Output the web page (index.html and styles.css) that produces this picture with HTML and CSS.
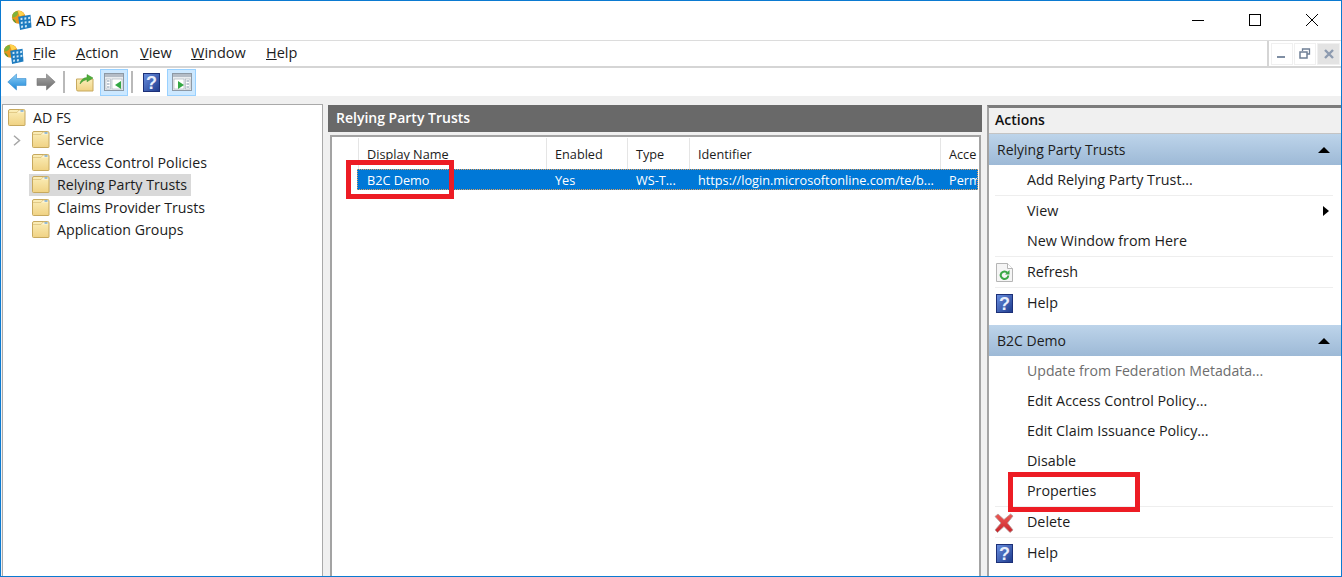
FILE: index.html
```html
<!DOCTYPE html>
<html lang="en">
<head>
    <meta charset="UTF-8">
    <meta name="viewport" content="width=device-width, initial-scale=1.0">
    <title>AD FS</title>
    <link rel="stylesheet" href="styles.css">
</head>
<body>
    <svg class="icon-defs" width="0" height="0">
        <defs>
            <linearGradient id="folderFill" x1="0" y1="0" x2="0" y2="1">
                <stop offset="0" stop-color="#fbeeb9"/>
                <stop offset="1" stop-color="#f0d283"/>
            </linearGradient>
            <linearGradient id="helpFill" x1="0" y1="0" x2="1" y2="1">
                <stop offset="0" stop-color="#6a90e0"/>
                <stop offset="1" stop-color="#1d3a8c"/>
            </linearGradient>
            <linearGradient id="backFill" x1="0" y1="0" x2="0" y2="1">
                <stop offset="0" stop-color="#8fd0f7"/>
                <stop offset="1" stop-color="#1b86d6"/>
            </linearGradient>
            <linearGradient id="fwdFill" x1="0" y1="0" x2="0" y2="1">
                <stop offset="0" stop-color="#a8a8a8"/>
                <stop offset="1" stop-color="#6a6a6a"/>
            </linearGradient>
            <linearGradient id="xFill" x1="0" y1="0" x2="0" y2="1">
                <stop offset="0" stop-color="#ee5a55"/>
                <stop offset="1" stop-color="#c9252b"/>
            </linearGradient>
            <symbol id="i-folder" viewBox="0 0 18 17">
                <path d="M.5 3V2Q.5.5 2 .5h13.5Q17 .5 17 2v14q0 .5-.5.5h-15q-1 0-1-1z" fill="url(#folderFill)" stroke="#c7a95e"/>
                <path d="M1 3.5h8L11 1h5.500v2.500" fill="#fff6d4" stroke="#d8bd75" stroke-width=".7"/>
                <rect x="12.500" y="1.300" width="3" height="1.400" fill="#6fa8dc"/>
            </symbol>
            <symbol id="i-help" viewBox="0 0 17 19">
                <rect x=".5" y=".5" width="16" height="18" fill="url(#helpFill)" stroke="#1c3078"/>
                <text x="8.500" y="16" text-anchor="middle" font-family="Liberation Sans, sans-serif" font-size="18" font-weight="700" fill="#e8eefc">?</text>
            </symbol>
            <symbol id="i-adfs" viewBox="0 0 22 21">
                <circle cx="8" cy="7.500" r="7" fill="#e8961e"/>
                <path d="M1.500 5Q3 1.500 7 1q1 3-1 5t-4.500 2z" fill="#7fb23a"/>
                <path d="M7 .8q5-.5 7 4l-5 2z" fill="#ffd34d"/>
                <path d="M1.500 9q3 1 4 5-3-1-4-5z" fill="#5b9a35"/>
                <path d="M7.500 7l13-2 1 13.500-12 2.500z" fill="#1e7cc0"/>
                <path d="M10 8.500l2-.3v2.300h-2zM14 7.900l2-.3v2.300l-2 .3zM18 7.300l2-.3v2.300l-2 .3zM10.300 12.500l2-.3v2.300l-2 .3zM14.300 12l2-.3v2.300l-2 .3zM18.300 11.500l2-.3v2.300l-2 .3zM10.600 16.500l2-.3v2.300l-2 .3zM14.600 16l2-.3v2.300l-2 .3z" fill="#c9e6f7"/>
            </symbol>
            <symbol id="i-pane" viewBox="0 0 20 18">
                <rect x=".5" y=".5" width="19" height="17" fill="#e9ecef" stroke="#8d99a5"/>
                <rect x="1" y="1" width="18" height="3" fill="#b4bcc6"/>
                <rect x="2" y="6" width="4.500" height="10" fill="#fff" stroke="#a3adb7" stroke-width=".6"/>
                <path d="M3 8h2.500M3 11h2.500M3 14h2.500" stroke="#7f93a8"/>
                <rect x="8" y="6" width="10" height="10" fill="#fff" stroke="#a3adb7" stroke-width=".6"/>
            </symbol>
        </defs>
    </svg>

    <div class="window">
        <header class="titlebar">
            <svg class="title-icon"><use href="#i-adfs"/></svg>
            <span class="title-text">AD FS</span>
            <div class="win-controls">
                <svg class="win-btn" viewBox="0 0 14 14"><path d="M1 7.500h12" stroke="#000"/></svg>
                <svg class="win-btn" viewBox="0 0 14 14"><rect x="1.500" y="1.500" width="11" height="11" fill="none" stroke="#000"/></svg>
                <svg class="win-btn" viewBox="0 0 14 14"><path d="M1 1l12 12M13 1L1 13" stroke="#000"/></svg>
            </div>
        </header>

        <nav class="menubar">
            <svg class="menu-icon"><use href="#i-adfs"/></svg>
            <div class="menu-items">
                <span class="menu-item m-file"><u>F</u>ile</span>
                <span class="menu-item m-action"><u>A</u>ction</span>
                <span class="menu-item m-view"><u>V</u>iew</span>
                <span class="menu-item m-window"><u>W</u>indow</span>
                <span class="menu-item m-help"><u>H</u>elp</span>
            </div>
            <div class="mdi-controls">
                <span class="mdi-btn"><svg viewBox="0 0 12 12"><rect x="1" y="8" width="8" height="2" fill="#7f8ea3"/></svg></span>
                <span class="mdi-btn"><svg viewBox="0 0 12 12"><path d="M3.500 3V1h7v5H8" fill="none" stroke="#6f7f95" stroke-width="1.300"/><rect x="1" y="4" width="7" height="6" fill="none" stroke="#6f7f95" stroke-width="1.500"/></svg></span>
                <span class="mdi-btn mdi-close"><svg viewBox="0 0 12 12"><path d="M2 2l8 8M10 2l-8 8" stroke="#8d9bb0" stroke-width="2.400"/></svg></span>
            </div>
        </nav>

        <div class="toolbar">
            <svg class="tool-arrow" viewBox="0 0 20 18"><path d="M9.500 1L.8 9l8.700 8v-4.500H19v-7H9.500z" fill="url(#backFill)" stroke="#3a8fd0" stroke-width=".6"/></svg>
            <svg class="tool-arrow tool-fwd" viewBox="0 0 20 18"><path d="M10.500 1l8.700 8-8.700 8v-4.500H1v-7h9.500z" fill="url(#fwdFill)" stroke="#777" stroke-width=".6"/></svg>
            <span class="tool-sep"></span>
            <svg class="tool-up" viewBox="0 0 18 19"><path d="M.5 6h16.500v12H2q-1.500 0-1.500-1.500z" fill="url(#folderFill)" stroke="#c7a95e"/><path d="M4 11Q5 5 11 4.500V1.500L17 5l-6 3.800V6.500Q7 7 4 11z" fill="#4fae3a" stroke="#3c8f2b" stroke-width=".5"/></svg>
            <span class="tool-btn tool-btn-a">
                <svg class="pane-icon"><use href="#i-pane"/></svg>
                <svg class="pane-arrow pane-arrow-a" viewBox="0 0 6 8"><path d="M6 0v8L0 4z" fill="#35a845"/></svg>
            </span>
            <span class="tool-sep tool-sep-b"></span>
            <svg class="tool-help"><use href="#i-help"/></svg>
            <span class="tool-btn tool-btn-b">
                <svg class="pane-icon pane-flip"><use href="#i-pane"/></svg>
                <svg class="pane-arrow pane-arrow-b" viewBox="0 0 6 8"><path d="M0 0v8l6-4z" fill="#35a845"/></svg>
            </span>
        </div>

        <main class="panes">
            <section class="tree-pane">
                <div class="tree-row tree-root"><svg class="folder"><use href="#i-folder"/></svg>AD FS</div>
                <div class="tree-row">
                    <svg class="chevron" viewBox="0 0 8 11"><path d="M1 .8L6.500 5.500 1 10.200" fill="none" stroke="#a6a6a6" stroke-width="1.500"/></svg>
                    <svg class="folder"><use href="#i-folder"/></svg>Service
                </div>
                <div class="tree-row"><svg class="folder"><use href="#i-folder"/></svg>Access Control Policies</div>
                <div class="tree-row tree-selected"><svg class="folder"><use href="#i-folder"/></svg>Relying Party Trusts</div>
                <div class="tree-row"><svg class="folder"><use href="#i-folder"/></svg>Claims Provider Trusts</div>
                <div class="tree-row"><svg class="folder"><use href="#i-folder"/></svg>Application Groups</div>
            </section>

            <section class="list-pane">
                <h2 class="list-title">Relying Party Trusts</h2>
                <div class="list-box">
                    <div class="list-row list-head">
                        <span class="cell"></span>
                        <span class="cell">Display Name</span>
                        <span class="cell">Enabled</span>
                        <span class="cell">Type</span>
                        <span class="cell">Identifier</span>
                        <span class="cell">Acce</span>
                    </div>
                    <div class="list-row list-selected">
                        <span class="cell"></span>
                        <span class="cell cell-name">B2C Demo<span class="callout callout-name"></span></span>
                        <span class="cell">Yes</span>
                        <span class="cell">WS-T...</span>
                        <span class="cell">https://login.microsoftonline.com/te/b...</span>
                        <span class="cell">Perm</span>
                    </div>
                </div>
            </section>

            <aside class="actions-pane">
                <h2 class="actions-title">Actions</h2>
                <div class="group-head">Relying Party Trusts<svg class="collapse" viewBox="0 0 12 6"><path d="M0 6L6 0l6 6z"/></svg></div>
                <div class="action">Add Relying Party Trust...</div>
                <div class="action-sep"></div>
                <div class="action">View<svg class="submenu" viewBox="0 0 6 10"><path d="M0 0l6 5-6 5z"/></svg></div>
                <div class="action">New Window from Here</div>
                <div class="action-sep"></div>
                <div class="action">
                    <svg class="action-icon" viewBox="0 0 17 19"><path d="M.5.5h11l5 5v13H.5z" fill="#f5f5f5" stroke="#b5b5b5"/><path d="M11.500.5v5h5" fill="#fff" stroke="#b5b5b5"/><path d="M11.300 9.600A3.800 3.800 0 1 0 12.300 12.500" fill="none" stroke="#3aa845" stroke-width="2"/><path d="M13.500 7v4.500H9z" fill="#3aa845"/></svg>
                    Refresh
                </div>
                <div class="action-sep"></div>
                <div class="action"><svg class="action-icon"><use href="#i-help"/></svg>Help</div>

                <div class="group-head group-second">B2C Demo<svg class="collapse" viewBox="0 0 12 6"><path d="M0 6L6 0l6 6z"/></svg></div>
                <div class="action action-off">Update from Federation Metadata...</div>
                <div class="action">Edit Access Control Policy...</div>
                <div class="action">Edit Claim Issuance Policy...</div>
                <div class="action">Disable</div>
                <div class="action"><span class="action-label">Properties<span class="callout callout-props"></span></span></div>
                <div class="action-sep"></div>
                <div class="action">
                    <svg class="action-icon action-x" viewBox="0 0 20 20"><path d="M1 3.500L4 1l6 5.500L16.500 1 19 3l-5.500 7 5.500 7-3 2.500-6-6-6.500 6L1 17l6-7z" fill="url(#xFill)" stroke="#b59a9a" stroke-width=".8"/></svg>
                    Delete
                </div>
                <div class="action-sep"></div>
                <div class="action"><svg class="action-icon"><use href="#i-help"/></svg>Help</div>
            </aside>
        </main>
    </div>
</body>
</html>
```

FILE: styles.css
```css
* {
    box-sizing: border-box;
}
html, body {
    margin: 0;
    height: 100%;
}
body {
    font-family: "Open Sans", "Noto Sans", sans-serif;
    font-size: 14px;
    color: #1c1c1c;
    overflow: hidden;
}
.icon-defs {
    position: absolute;
}
.window {
    height: 577px;
    border: 1px solid #0b7ad1;
    display: flex;
    flex-direction: column;
    background: #f0f0f0;
}

/* title bar */
.titlebar {
    height: 39px;
    flex: none;
    display: flex;
    align-items: center;
    background: #fff;
    padding: 0 0 2px 10px;
}
.title-icon {
    width: 21px;
    height: 20px;
}
.title-text {
    margin-left: 4px;
    font-size: 15px;
    color: #000;
}
.win-controls {
    margin-left: auto;
    display: flex;
    gap: 43px;
    padding-right: 22px;
}
.win-btn {
    width: 14px;
    height: 14px;
}

/* menu bar */
.menubar {
    height: 28px;
    flex: none;
    display: flex;
    align-items: center;
    background: #fff;
    border-top: 1px solid #dcdcdc;
    border-bottom: 2px solid #d5d5d5;
    padding-left: 2px;
    font-size: 14.5px;
}
.menu-icon {
    width: 21px;
    height: 20px;
}
.menu-items {
    display: flex;
    margin-left: 9px;
    padding-bottom: 2px;
}
.menu-item {
    display: block;
}
.m-file { width: 43px; }
.m-action { width: 64px; }
.m-view { width: 51px; }
.m-window { width: 75px; }
.mdi-controls {
    margin-left: auto;
    align-self: stretch;
    display: flex;
    gap: 1px;
    align-items: center;
    border-left: 2px solid #d5d5d5;
    padding: 0 1px 0 2px;
}
.mdi-btn {
    width: 22px;
    height: 22px;
    display: flex;
    align-items: center;
    justify-content: center;
    border: 1px solid #f0f0f0;
}
.mdi-btn svg {
    width: 12px;
    height: 12px;
}
.mdi-close {
    background: #e3e3e3;
    width: 23px;
}

/* toolbar */
.toolbar {
    height: 28px;
    flex: none;
    display: flex;
    align-items: center;
    background: #fff;
    padding-left: 6px;
}
.tool-arrow {
    width: 20px;
    height: 18px;
}
.tool-fwd {
    margin-left: 9px;
}
.tool-sep {
    width: 2px;
    height: 22px;
    background: #b9b9b9;
    margin-left: 7px;
}
.tool-sep-b {
    margin-left: 3px;
}
.tool-up {
    width: 18px;
    height: 19px;
    margin-left: 11px;
}
.tool-btn {
    position: relative;
    width: 28px;
    height: 27px;
    display: flex;
    align-items: center;
    justify-content: center;
    background: #cce8ff;
    border: 1px solid #99d1ff;
}
.tool-btn-a {
    margin-left: 6px;
}
.tool-btn-b {
    margin-left: 7px;
    width: 29px;
}
.tool-help {
    width: 17px;
    height: 19px;
    margin-left: 10px;
}
.pane-icon {
    width: 20px;
    height: 18px;
}
.pane-flip {
    transform: scaleX(-1);
}
.pane-arrow {
    position: absolute;
    width: 6px;
    height: 8px;
    top: 11px;
}
.pane-arrow-a { left: 14px; }
.pane-arrow-b { left: 10px; }

/* three panes */
.panes {
    flex: 1;
    min-height: 0;
    display: grid;
    grid-template-columns: 326px 659px 1fr;
    padding: 8px 0 0 1px;
}

/* tree */
.tree-pane {
    margin-right: 5px;
    background: #fff;
    border: 1px solid #a9a9a9;
    border-bottom: 0;
    padding-top: 1px;
    font-size: 14.2px;
}
.tree-row {
    position: relative;
    height: 22.5px;
    display: flex;
    align-items: center;
    width: 162px;
    margin-left: 26px;
    padding-left: 3px;
    white-space: nowrap;
}
.tree-row .folder {
    width: 18px;
    height: 17px;
    margin-right: 7px;
    flex: none;
}
.tree-root {
    margin-left: 2px;
    padding-left: 3px;
}
.tree-selected {
    background: #d9d9d9;
}
.chevron {
    position: absolute;
    left: -16px;
    top: 6px;
    width: 8px;
    height: 11px;
}

/* list */
.list-pane {
    margin-right: 5px;
    display: flex;
    flex-direction: column;
    min-height: 0;
}
.list-title {
    margin: 1px 0 0;
    height: 27px;
    line-height: 26px;
    flex: none;
    background: #696969;
    color: #fff;
    font-size: 14px;
    font-weight: 600;
    padding-left: 8px;
}
.list-box {
    flex: 1;
    margin: 3px 1px 0 2px;
    background: #fff;
    border: 2px solid #a3a3a3;
    border-bottom: 0;
    padding-top: 1px;
    font-size: 12.7px;
}
.list-row {
    display: grid;
    grid-template-columns: 27px 188px 81px 62px 251px 37px;
    white-space: nowrap;
}
.list-head {
    height: 31px;
    align-items: stretch;
}
.list-head .cell {
    border-right: 1px solid #e5e5e5;
    line-height: 32px;
    padding-left: 8px;
    overflow: hidden;
}
.list-head .cell:last-child {
    border-right: 0;
}
.list-selected {
    height: 21px;
    line-height: 22px;
    background: #0078d7;
    color: #fff;
    outline: 1px dotted #e0a060;
    outline-offset: -1px;
    margin: 0 1px 0 25px;
    grid-template-columns: 2px 188px 81px 62px 251px 36px;
}
.list-selected .cell {
    padding-left: 8px;
    overflow: hidden;
}
.list-selected .cell:first-child {
    padding: 0;
}
.list-selected .cell-name {
    position: relative;
    overflow: visible;
}
.callout {
    position: absolute;
    border: 5px solid #ed1c24;
}
.callout-name {
    left: -13px;
    top: -9px;
    width: 108px;
    height: 39px;
}
.callout-props {
    left: -19px;
    top: -9px;
    width: 132px;
    height: 40px;
}

/* actions */
.actions-pane {
    border-left: 2px solid #a3a3a3;
    border-top: 3px solid #7c7c7c;
    margin-top: 1px;
    background: #fff;
    min-height: 0;
    overflow: hidden;
}
.actions-title {
    margin: 0;
    height: 26px;
    line-height: 23px;
    background: #f0f0f0;
    border-bottom: 1px solid #c4c4c4;
    font-size: 14px;
    font-weight: 600;
    padding-left: 6px;
    color: #111;
}
.group-head {
    height: 31px;
    display: flex;
    align-items: center;
    padding-left: 8px;
    background: linear-gradient(#bdd4ea, #9db9d6);
}
.group-second {
    margin-top: 7px;
}
.collapse {
    width: 12px;
    height: 6px;
    margin-left: auto;
    margin-right: 11px;
}
.action {
    position: relative;
    height: 30px;
    display: flex;
    align-items: center;
    padding: 0 0 2px 38px;
    font-size: 14.3px;
}
.action-label {
    position: relative;
}
.action-off {
    color: #6d6d6d;
    font-size: 14.1px;
}
.action-sep {
    height: 1px;
    margin: 0 8px 0 6px;
    background: #eeeeee;
}
.action-icon {
    position: absolute;
    left: 7px;
    top: 6px;
    width: 17px;
    height: 19px;
}
.action-x {
    left: 5px;
    width: 20px;
    height: 20px;
}
.submenu {
    position: absolute;
    left: 334px;
    top: 10px;
    width: 6px;
    height: 10px;
}
```
